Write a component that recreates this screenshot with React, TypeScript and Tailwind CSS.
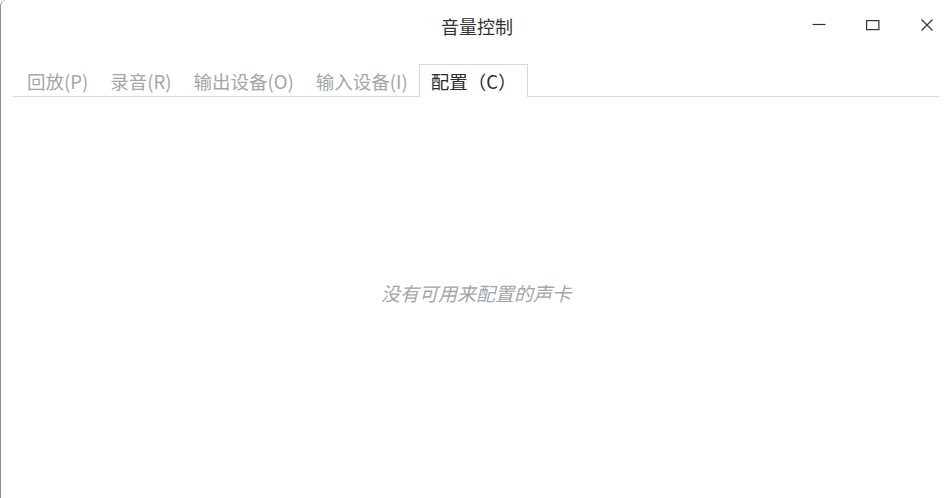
import React, { useState } from "react";

const tabs = ["回放(P)", "录音(R)", "输出设备(O)", "输入设备(I)", "配置（C）"];

export default function App() {
  const [active, setActive] = useState(4);

  return (
    <div
      className="w-[951px] h-[498px] bg-white border-l border-[#8e8e8e] rounded-tl-[6px] flex flex-col text-[#333] overflow-hidden"
      style={{ fontFamily: '"Noto Sans CJK SC", "Noto Sans", sans-serif' }}
    >
      {/* Title bar */}
      <div className="h-[52px] flex items-center relative">
        <div className="flex-1 text-center text-[18px] pl-[2px]">音量控制</div>
        <div className="absolute right-[-3px] top-0 h-[50px] flex items-center">
          <button className="w-[54px] h-[40px] flex items-center justify-center">
            <svg width="14" height="14" viewBox="0 0 14 14">
              <path d="M0.5 6.5h13" stroke="#333" strokeWidth="1.2" />
            </svg>
          </button>
          <button className="w-[54px] h-[40px] flex items-center justify-center">
            <svg width="14" height="14" viewBox="0 0 14 14">
              <rect x="0.6" y="2.6" width="12.3" height="9" fill="none" stroke="#333" strokeWidth="1.2" />
            </svg>
          </button>
          <button className="w-[54px] h-[40px] flex items-center justify-center">
            <svg width="14" height="14" viewBox="0 0 14 14">
              <path d="M1.5 1.5l11 11M12.5 1.5l-11 11" stroke="#333" strokeWidth="1.2" />
            </svg>
          </button>
        </div>
      </div>

      {/* Tabs */}
      <div className="mt-[12px] mx-[12px] pl-[3px] flex items-end border-b border-[#d6d9dd] h-[33px]">
        {tabs.map((t, i) => {
          const isActive = i === active;
          return (
            <div
              key={t}
              onClick={() => setActive(i)}
              className={
                isActive
                  ? "h-[33px] pt-[2px] px-[11px] border border-b-0 border-[#d6d9dd] bg-white -mb-px flex items-center text-[18.5px] text-[#2b2b2b] cursor-pointer"
                  : "h-[32px] pt-[3px] px-[11px] flex items-center text-[18.5px] text-[#a2a6ad] cursor-pointer"
              }
            >
              {t}
            </div>
          );
        })}
      </div>

      {/* Body */}
      <div className="flex-1 flex items-center justify-center pb-[8px]">
        <span className="italic text-[19px] text-[#a2a6ad]">没有可用来配置的声卡</span>
      </div>
    </div>
  );
}
